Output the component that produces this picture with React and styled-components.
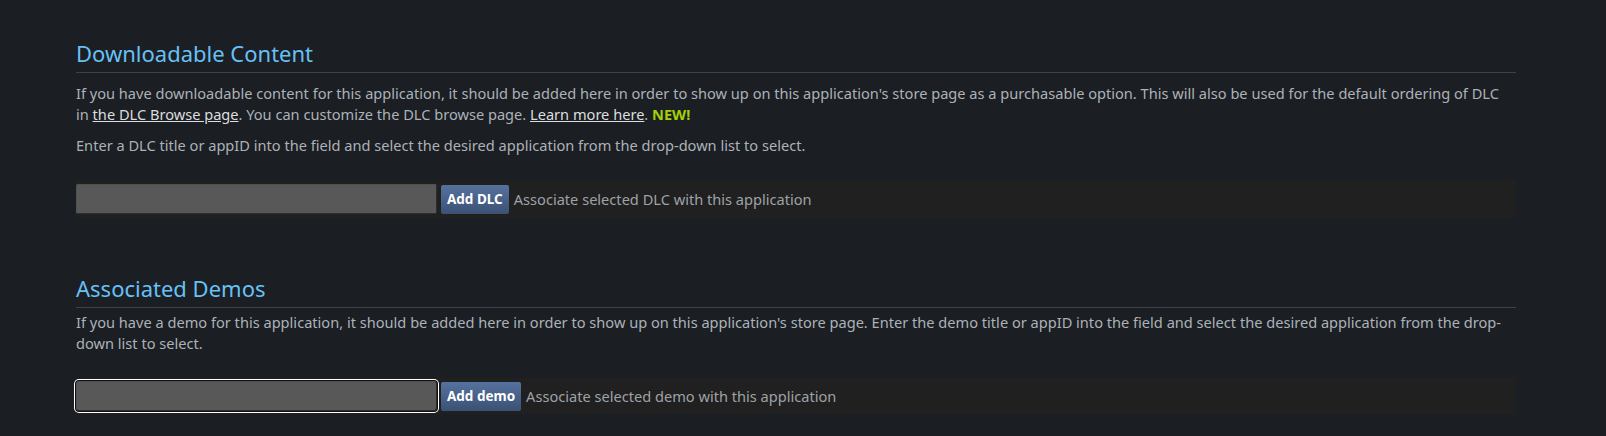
import React from 'react';
import styled, { createGlobalStyle } from 'styled-components';

const GlobalStyle = createGlobalStyle`
  html, body {
    margin: 0;
    padding: 0;
    background: #1b1e23;
  }
  body {
    font-family: "Noto Sans", "DejaVu Sans", sans-serif;
  }
`;

const Page = styled.div`
  padding: 38px 90px 0 76px;
  min-height: 436px;
  box-sizing: border-box;
  background: #1b1e23;
`;

const Section = styled.section`
  margin-bottom: ${props => props.gap || 0}px;
`;

const Heading = styled.h2`
  margin: 0;
  padding-bottom: 4px;
  font-size: 22px;
  font-weight: normal;
  line-height: 30px;
  color: #67c1f5;
  border-bottom: 1px solid #3d4148;
`;

const Para = styled.p`
  margin: ${props => (props.top != null ? props.top : 10)}px 0 9px;
  padding-right: 6px;
  font-size: 14.6px;
  line-height: 21px;
  color: #acb2b8;
`;

const Link = styled.a`
  color: #dcdedf;
  text-decoration: underline;
  cursor: pointer;
`;

const New = styled.span`
  color: #a4d007;
  font-weight: bold;
`;

const AddRow = styled.div`
  display: flex;
  align-items: center;
  gap: 4px;
  margin-top: ${props => props.top || 0}px;
  height: ${props => props.height || 38}px;
  background: #202020;
`;

const TextBox = styled.input`
  width: 361px;
  height: 30px;
  box-sizing: border-box;
  margin: 0;
  border: 1px solid #2e2e2e;
  border-top-color: #515151;
  border-left-color: #515151;
  border-radius: 2px;
  background: #585858;
  color: #fff;
  font-family: inherit;
  font-size: 14px;
  padding: 0 4px;
  outline: none;
  ${props => props.focused && `
    box-shadow: 0 0 0 1px #101010, 0 0 0 2px #ffffff;
    border-radius: 3px;
  `}
`;

const Button = styled.button`
  height: 29px;
  padding: 0 6px;
  border: none;
  border-radius: 2px;
  background: linear-gradient(to bottom, #55729e 0%, #3b5175 100%);
  color: #ffffff;
  font-family: inherit;
  font-size: 13.5px;
  font-weight: bold;
  cursor: pointer;
`;

const Hint = styled.span`
  margin-left: 1px;
  font-size: 14.6px;
  color: #9ea2a6;
`;

export default function App() {
  return (
    <Page>
      <GlobalStyle />
      <Section gap={55}>
        <Heading>Downloadable Content</Heading>
        <Para>
          If you have downloadable content for this application, it should be added here in order to show up on this
          application's store page as a purchasable option. This will also be used for the default ordering of DLC
          in <Link>the DLC Browse page</Link>. You can customize the DLC browse page. <Link>Learn more here</Link>.{' '}
          <New>NEW!</New>
        </Para>
        <Para>Enter a DLC title or appID into the field and select the desired application from the drop-down list to select.</Para>
        <AddRow top={24}>
          <TextBox type="text" />
          <Button>Add DLC</Button>
          <Hint>Associate selected DLC with this application</Hint>
        </AddRow>
      </Section>
      <Section>
        <Heading>Associated Demos</Heading>
        <Para top={4}>
          If you have a demo for this application, it should be added here in order to show up on this application's
          store page. Enter the demo title or appID into the field and select the desired application from the
          drop-down list to select.
        </Para>
        <AddRow top={24} height={36}>
          <TextBox type="text" focused />
          <Button>Add demo</Button>
          <Hint>Associate selected demo with this application</Hint>
        </AddRow>
      </Section>
    </Page>
  );
}
